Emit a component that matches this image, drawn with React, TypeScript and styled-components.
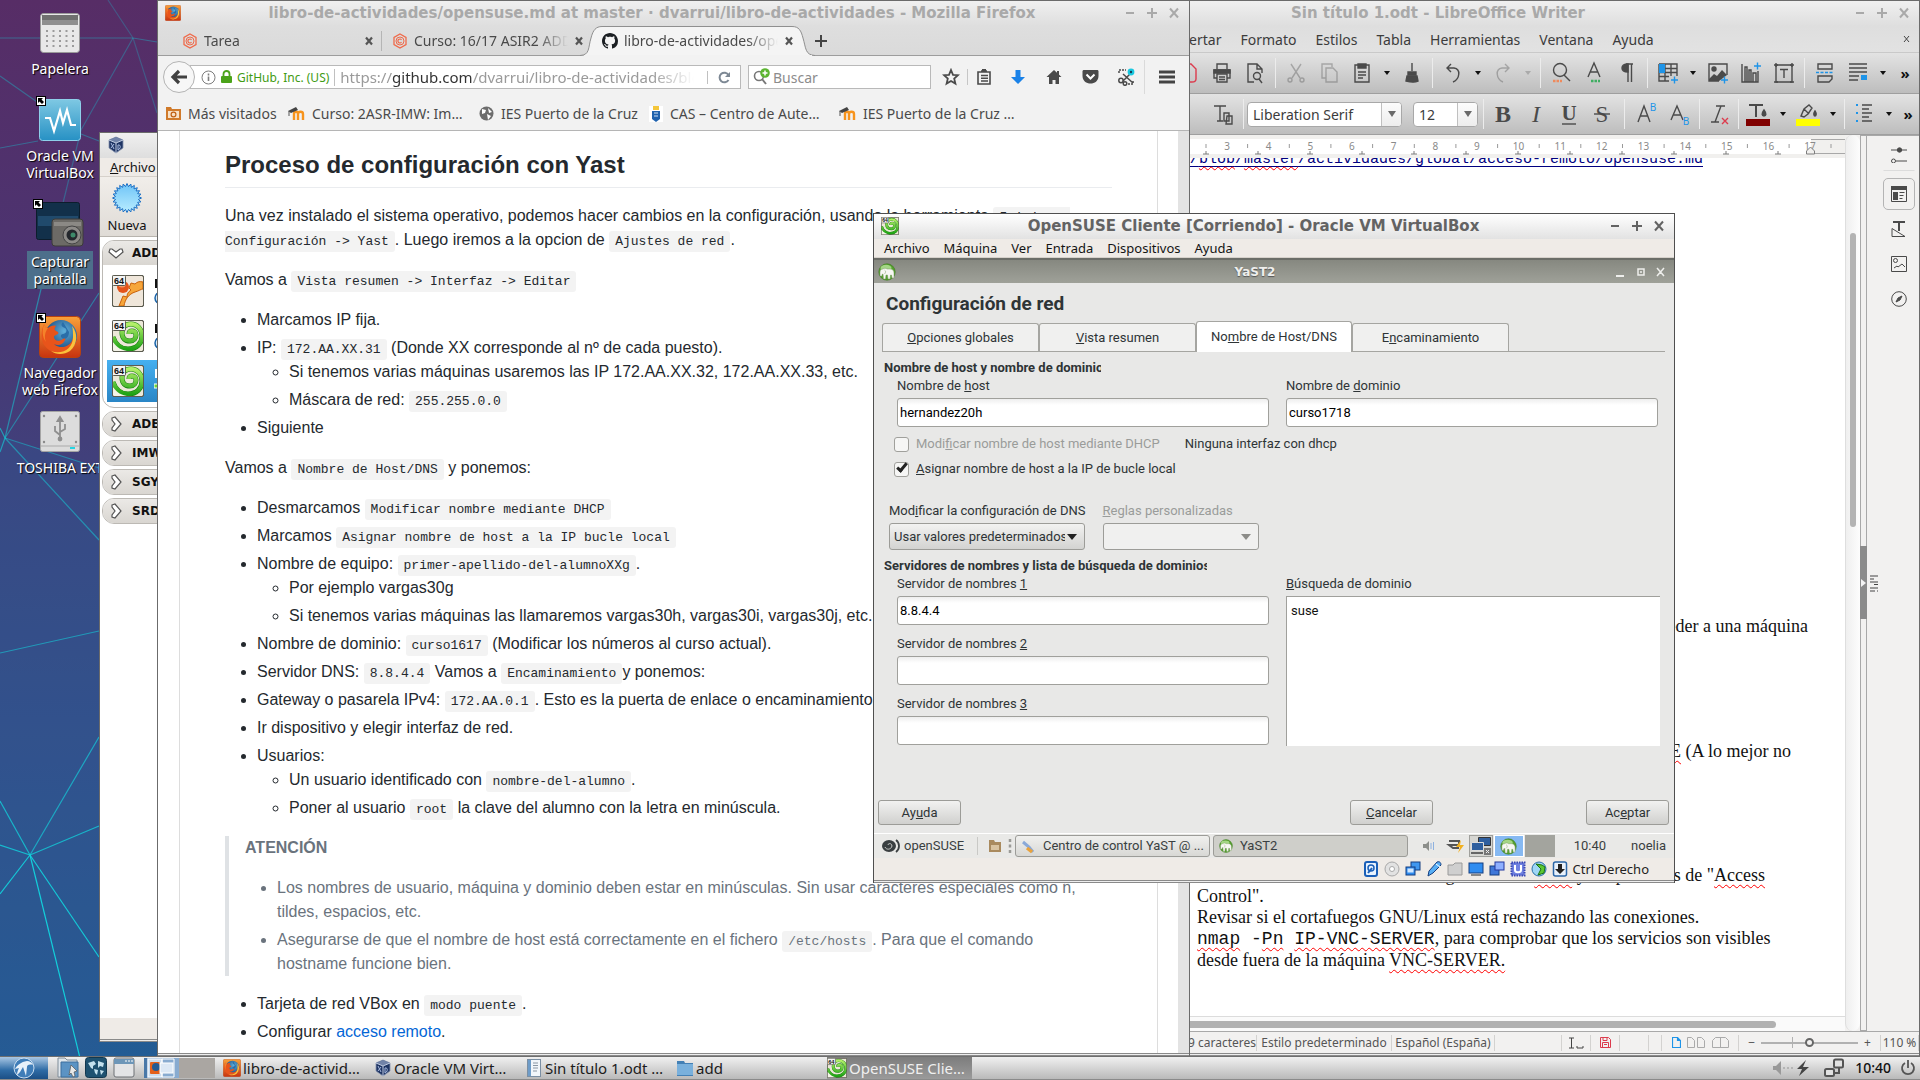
import React from 'react';
import styled, { createGlobalStyle, css } from 'styled-components';

const UI = '"Noto Sans", "Open Sans", sans-serif';
const TITLE = '"DejaVu Sans", "Noto Sans", sans-serif';
const YAST = 'Roboto, "Noto Sans", sans-serif';
const SANS = '"Liberation Sans", Arial, sans-serif';
const SERIF = '"Liberation Serif", "Times New Roman", serif';
const MONO = '"Liberation Mono", "Courier New", monospace';

const Global = createGlobalStyle`
  *, *::before, *::after { box-sizing: border-box; }
  html, body, #root { height: 100%; margin: 0; }
  body { overflow: hidden; font-family: ${UI}; font-size: 14px; color: #3c3c3c; }
  button, input, select, textarea { font: inherit; color: inherit; margin: 0; }
  button { border: 0; background: none; padding: 0; }
  svg { display: block; flex: none; }
  a { text-decoration: none; color: inherit; }
  ul { list-style: disc; }
`;

/* ---------- desktop ---------- */

const Screen = styled.div`
  height: 100vh;
  display: flex;
  flex-direction: column;
`;

const Desktop = styled.main`
  position: relative;
  flex: 1;
  min-height: 0;
  overflow: hidden;
  background: linear-gradient(#572d66 0%, #4b3471 26%, #3c4680 52%, #34508a 72%, #235c94 100%);
`;

const Wallpaper = styled.svg`
  position: absolute;
  inset: 0;
`;

const Shortcut = styled.button<{ $top: number }>`
  position: absolute;
  top: ${(p) => p.$top}px;
  left: 0;
  width: 120px;
  display: flex;
  flex-direction: column;
  align-items: center;
  color: #fff;
  font-size: 14px;
  line-height: 17px;
`;

const ShortcutLabel = styled.span<{ $active?: boolean }>`
  margin-top: 4px;
  padding: 2px 4px;
  white-space: pre;
  text-shadow: 1px 1px 1px #000;
  background: ${(p) => (p.$active ? '#4d6f8b' : 'transparent')};
`;

const ShortcutIcon = styled.span`
  position: relative;
`;

const LinkBadge = styled.svg`
  position: absolute;
  left: -3px;
  top: -3px;
`;

/* ---------- window frame ---------- */

const Win = styled.section`
  position: absolute;
  display: flex;
  flex-direction: column;
  border: 1px solid #6b6b6b;
  border-bottom: 0;
  background: #f2f1f0;
  overflow: hidden;
`;

const TitleBar = styled.header<{ $active?: boolean }>`
  flex: none;
  height: 25px;
  display: flex;
  align-items: center;
  padding: 0 8px 2px 7px;
  background: ${(p) => (p.$active ? 'linear-gradient(#fff, #e2e2e2)' : 'linear-gradient(#f0f0f0, #dedede)')};
  color: ${(p) => (p.$active ? '#636363' : '#a9a9a9')};
`;

const TitleText = styled.h1`
  flex: 1;
  margin: 0;
  text-align: center;
  font: bold 15px/20px ${TITLE};
  white-space: nowrap;
`;

const WinButtons = styled.div`
  display: flex;
  gap: 8px;
`;

const WinButton = styled.button`
  width: 14px;
  height: 14px;
`;

function Buttons() {
  const shapes = [
    ['Minimizar', 'M3 7h8'],
    ['Maximizar', 'M2 7h10M7 2v10'],
    ['Cerrar', 'M3 2.5l8 9M11 2.5l-8 9'],
  ];
  return (
    <WinButtons>
      {shapes.map(([label, d]) => (
        <WinButton key={label} aria-label={label}>
          <svg width="14" height="14" viewBox="0 0 14 14">
            <path d={d} stroke="currentColor" strokeWidth="2" fill="none" />
          </svg>
        </WinButton>
      ))}
    </WinButtons>
  );
}

/* ---------- shared drawings ---------- */

function FirefoxLogo({ size }: { size: number }) {
  return (
    <svg width={size} height={size} viewBox="0 0 42 42">
      <defs>
        <linearGradient id="ffbg" x1="0" y1="0" x2="0" y2="1">
          <stop offset="0" stopColor="#f9a23a" />
          <stop offset="1" stopColor="#c8330f" />
        </linearGradient>
        <radialGradient id="ffglobe" cx=".6" cy=".35" r=".7">
          <stop offset="0" stopColor="#5fb0dc" />
          <stop offset="1" stopColor="#123a70" />
        </radialGradient>
      </defs>
      <rect x=".5" y=".5" width="41" height="41" rx="4" fill="url(#ffbg)" stroke="#b8420f" />
      <circle cx="22" cy="20" r="16" fill="url(#ffglobe)" />
      <path d="M24 6c-3 3-1 5 2 6 3 2 1 6-2 6s-3 4 1 5c3 0 5-3 5-7" fill="#2a6ea9" />
      <path
        d="M5 8c1 3 2 4 4 4 2-2 6-3 8-2-2 2-2 4 0 5 2 1 3 1 2 3-1 1-4 1-4 3 0 4 5 5 9 2 2-1 3 0 2 1-2 5-7 6-11 4 6 6 17 3 19-6 1-3 1-5 0-8 2 2 3 5 3 8-1 10-12 17-22 14C3 33 0 20 5 8z"
        fill="#e8541b"
      />
      <path d="M33 10c6 7 6 18-2 25-6 4-14 4-19 0 11 4 22-2 22-14 0-4 0-8-1-11z" fill="#fbc23c" />
      <path d="M5 8c1 3 2 4 4 4-3 4-4 9-2 14-4-5-4-12-2-18z" fill="#f5822a" />
    </svg>
  );
}

const Guest64 = styled.span<{ $size: number }>`
  flex: none;
  width: ${(p) => p.$size}px;
  height: ${(p) => p.$size}px;
`;

function GuestIcon({ size, ubuntu }: { size: number; ubuntu?: boolean }) {
  return (
    <Guest64 $size={size}>
      <svg width={size} height={size} viewBox="0 0 32 32">
        <defs>
          <linearGradient id="gk" x1="0" y1="0" x2="0" y2="1">
            <stop offset="0" stopColor="#b4f06a" />
            <stop offset="1" stopColor="#1fa315" />
          </linearGradient>
        </defs>
        <rect x=".5" y=".5" width="31" height="31" rx="1.5" fill={ubuntu ? '#efe6da' : '#ece8d8'} stroke="#5c5c50" />
        {ubuntu ? (
          <g>
            <path d="M31 7c-4-1-6 0-8 2l-4-1-2 5 2 2c-3 2-4 4-4 7l-4-1-4 10h5c1-7 5-12 11-14 4-1 6-3 8-3z" fill="#f6a63a" stroke="#c9600a" />
            <circle cx="11" cy="12" r="6" fill="#e4541b" />
            <ellipse cx="10" cy="10" rx="3.5" ry="2.5" fill="#f49a6a" />
          </g>
        ) : (
          <g>
            <path d="M1 17c3 9 9 12 15 12 9 0 14-6 14-13 0-7-5-12-11-12-6 0-9 4-9 9 0 5 3 8 8 8 4 0 6-3 6-6s-2-4-4-4-3 1-3 3" fill="none" stroke="#17800f" strokeWidth="5" />
            <path d="M1 17c3 9 9 12 15 12 9 0 14-6 14-13 0-7-5-12-11-12-6 0-9 4-9 9 0 5 3 8 8 8 4 0 6-3 6-6s-2-4-4-4-3 1-3 3" fill="none" stroke="url(#gk)" strokeWidth="4" />
            <path d="M1 22c4 6 9 8 14 9H1z" fill="#f4f4e8" />
          </g>
        )}
        <rect x=".5" y=".5" width="31" height="31" rx="1.5" fill="none" stroke="#5c5c50" />
        <rect x=".5" y=".5" width="13" height="10" rx="1" fill="#f4f4f4" stroke="#5c5c50" />
        <text x="7" y="9" fontSize="9" fontWeight="bold" fontFamily="Liberation Sans" textAnchor="middle" fill="#111">
          64
        </text>
      </svg>
    </Guest64>
  );
}

function VBoxCube({ size }: { size: number }) {
  return (
    <svg width={size} height={size} viewBox="0 0 18 18">
      <path d="M9 1l7 3v8l-7 5-7-5V4z" fill="#1f3564" stroke="#8793ad" strokeWidth=".8" />
      <path d="M9 1l7 3-7 3-7-3z" fill="#7183a8" />
      <path d="M9 7v10M2 4l7 3 7-3" stroke="#c0cbe0" fill="none" />
      <path d="M4 7l3 6M7 8l-3 4M11 9v5c3-1 3-6 0-5" stroke="#a9bbe0" fill="none" />
    </svg>
  );
}

function YastBall({ size }: { size: number }) {
  return (
    <svg width={size} height={size} viewBox="0 0 18 18">
      <circle cx="9" cy="9" r="8.2" fill="#55a02e" stroke="#3b7a1c" strokeWidth=".6" />
      <ellipse cx="8" cy="5" rx="5.5" ry="3.2" fill="#a4d685" />
      <path
        d="M2 13V9c0-2 1-3 3-3 1-1 3-1 4 0h3c3 0 4 2 4 4v5h-2l-.5-3h-1l-.5 4h-2l-.5-4H8L7.500 16h-2L5 11l-1 .5V13z"
        fill="#f7f7f3"
        stroke="#7d9b68"
        strokeWidth=".5"
      />
      <path d="M6.5 7c1.500 1 1.500 2.500 0 4" fill="none" stroke="#9fb58c" strokeWidth=".7" />
    </svg>
  );
}

function Hexa() {
  return (
    <svg width="16" height="16" viewBox="0 0 16 16" fill="none" stroke="#ef6a4a">
      <path d="M8 1l6 3.4v7.2L8 15l-6-3.4V4.4z" strokeWidth="1.3" />
      <circle cx="8" cy="8" r="4" />
      <path d="M9.5 6.8a2 2 0 1 0 0 2.4" strokeWidth="1.2" />
    </svg>
  );
}

/* ---------- VirtualBox manager ---------- */

const ManagerWin = styled(Win)`
  left: 99px;
  top: 132px;
  bottom: 14px;
  width: 220px;
  background: #fff;
  color: #111;
`;

const MenuBar = styled.nav`
  flex: none;
  display: flex;
  align-items: center;
  height: 19px;
  padding: 0 10px 1px;
  gap: 14px;
  background: #efebe7;
  font-size: 13px;
  line-height: 18px;
  color: #141414;
  border-bottom: 1px solid #d6d1cb;
`;

const ManagerTools = styled.div`
  flex: none;
  height: 60px;
  padding: 6px 8px 0;
  background: linear-gradient(#f1eeea, #dfdbd6);
  border-bottom: 1px solid #b8b4ae;
`;

const NewButton = styled.button`
  display: flex;
  flex-direction: column;
  align-items: center;
  gap: 3px;
  width: 38px;
  font-size: 13px;
  line-height: 18px;
`;

const Groups = styled.div`
  flex: 1;
  padding: 3px 0 0 2px;
  display: flex;
  flex-direction: column;
  gap: 3px;
`;

const Group = styled.div`
  border: 1px solid #bcb9b4;
  border-radius: 12px 0 0 12px;
  overflow: hidden;
`;

const GroupHead = styled.button`
  display: flex;
  align-items: center;
  gap: 8px;
  width: 100%;
  height: 24px;
  padding-left: 5px;
  background: linear-gradient(#ebe9e6, #d9d6d1);
  font: bold 12px/18px ${TITLE};
`;

const Machine = styled.div<{ $active?: boolean }>`
  display: flex;
  align-items: center;
  gap: 10px;
  height: 42px;
  margin-left: 4px;
  padding-left: 5px;
  background: ${(p) => (p.$active ? 'linear-gradient(#46b0f0, #2a86c6)' : '#fff')};
`;

const Machines = styled.div`
  display: flex;
  flex-direction: column;
  gap: 3px;
  padding: 5px 0;
`;

const ManagerStatus = styled.footer`
  flex: none;
  height: 24px;
  background: #efebe7;
  border-bottom: 3px double #8a8a8a;
`;

function Chevron({ open }: { open?: boolean }) {
  return (
    <svg width="16" height="16" viewBox="0 0 16 16">
      <path
        transform={open ? 'rotate(90 8 8)' : undefined}
        d="M4 2l3-1 6 7-6 7-3-1v-2l3-4-3-4z"
        fill="#fff"
        stroke="#555"
        strokeWidth="1.2"
      />
    </svg>
  );
}

function StateDots({ active }: { active?: boolean }) {
  return (
    <svg width="20" height="34" viewBox="0 0 20 34">
      <path d="M1 5h2v9H1z" fill={active ? '#fff' : '#111'} />
      {active ? (
        <path d="M0 20h8v-3l6 5-6 5v-3H0z" fill="#6fd53a" stroke="#fff" />
      ) : (
        <circle cx="7" cy="24" r="6" fill="#d7ebfa" stroke="#1a63a8" strokeWidth="1.5" />
      )}
    </svg>
  );
}

function Manager() {
  return (
    <ManagerWin>
      <TitleBar>
        <VBoxCube size={18} />
      </TitleBar>
      <MenuBar>
        <span>
          <u>A</u>rchivo
        </span>
      </MenuBar>
      <ManagerTools>
        <NewButton>
          <svg width="30" height="30" viewBox="-15 -15 30 30">
            <defs>
              <linearGradient id="star" x1="0" y1="0" x2="0" y2="1">
                <stop offset="0" stopColor="#6fc4f7" />
                <stop offset="1" stopColor="#b9edff" />
              </linearGradient>
            </defs>
            <polygon
              points={Array.from({ length: 48 }, (_, i) => {
                const r = i % 2 ? 11.5 : 14.5;
                const a = (i * Math.PI) / 24;
                return `${(r * Math.cos(a)).toFixed(1)},${(r * Math.sin(a)).toFixed(1)}`;
              }).join(' ')}
              fill="url(#star)"
              stroke="#1c6fc4"
            />
          </svg>
          Nueva
        </NewButton>
      </ManagerTools>
      <Groups>
        <Group>
          <GroupHead>
            <Chevron open />
            ADD
          </GroupHead>
          <Machines>
            <Machine>
              <GuestIcon size={32} ubuntu />
              <StateDots />
            </Machine>
            <Machine>
              <GuestIcon size={32} />
              <StateDots />
            </Machine>
            <Machine $active>
              <GuestIcon size={32} />
              <StateDots active />
            </Machine>
          </Machines>
        </Group>
        {['ADE', 'IMW', 'SGY', 'SRD'].map((g) => (
          <Group key={g}>
            <GroupHead>
              <Chevron />
              {g}
            </GroupHead>
          </Group>
        ))}
      </Groups>
      <ManagerStatus />
    </ManagerWin>
  );
}

/* ---------- Firefox ---------- */

const FirefoxWin = styled(Win)`
  left: 157px;
  top: 0;
  bottom: 0;
  width: 1033px;
  color: #4a4a4a;
`;

const Tabs = styled.div`
  flex: none;
  display: flex;
  align-items: center;
  height: 30px;
  padding-left: 14px;
  background: linear-gradient(#dedede, #dadada);
  border-bottom: 1px solid #9d9d9d;
`;

const Tab = styled.div<{ $sep?: boolean }>`
  position: relative;
  display: flex;
  align-items: center;
  gap: 6px;
  width: 210px;
  height: 20px;
  padding-left: 10px;
  border-right: 1px solid ${(p) => (p.$sep ? '#b5b5b5' : 'transparent')};
`;

const TabShape = styled.svg`
  position: absolute;
  left: -12px;
  top: -5px;
`;

const TabText = styled.span`
  position: relative;
  width: 154px;
  overflow: hidden;
  white-space: nowrap;
  font-size: 14px;
  line-height: 20px;
  mask-image: linear-gradient(90deg, #000 80%, transparent);
`;

const TabIcon = styled.span`
  position: relative;
`;

const PlainButton = styled.button`
  position: relative;
  display: grid;
  place-items: center;
`;

function Close() {
  return (
    <PlainButton aria-label="Cerrar pestaña">
      <svg width="10" height="10" viewBox="0 0 10 10">
        <path d="M2 1.5l6 7M8 1.5l-6 7" stroke="#555" strokeWidth="2.2" />
      </svg>
    </PlainButton>
  );
}

const NavBar = styled.div`
  flex: none;
  display: flex;
  align-items: center;
  height: 42px;
  padding: 0 0 0 5px;
  background: #f2f2f2;
`;

const Back = styled.button`
  position: relative;
  z-index: 1;
  width: 32px;
  height: 32px;
  display: grid;
  place-items: center;
  border: 1px solid #b4b4b4;
  border-radius: 50%;
  background: #f7f7f7;
`;

const UrlBox = styled.div`
  flex: none;
  display: flex;
  align-items: center;
  gap: 5px;
  width: 551px;
  height: 24px;
  margin-left: -5px;
  padding: 0 9px 0 10px;
  border: 1px solid #b9b9b9;
  background: #fff;
`;

const Identity = styled.span`
  color: #3f9b13;
  font-size: 12px;
  padding-right: 5px;
  border-right: 1px solid #c0c0c0;
  white-space: nowrap;
`;

const Url = styled.span`
  flex: 1;
  overflow: hidden;
  white-space: nowrap;
  font-size: 15px;
  line-height: 22px;
  color: #9a9a9a;
  mask-image: linear-gradient(90deg, #000 88%, transparent);
  b {
    font-weight: normal;
    color: #333;
  }
`;

const Reload = styled.button`
  padding-left: 10px;
  margin-left: 8px;
  border-left: 1px solid #c0c0c0;
`;

const SearchBox = styled.label`
  flex: none;
  display: flex;
  align-items: center;
  gap: 3px;
  width: 183px;
  height: 24px;
  margin-left: 7px;
  padding-left: 4px;
  border: 1px solid #b9b9b9;
  background: #fff;
`;

const SearchInput = styled.input`
  width: 140px;
  border: 0;
  padding: 0;
  outline: 0;
  background: none;
  font-size: 14px;
  &::placeholder {
    color: #8c8c8c;
    opacity: 1;
  }
`;

const NavTools = styled.div`
  flex: none;
  display: flex;
  align-items: center;
  padding-left: 4px;
`;

const NavTool = styled(PlainButton)<{ $w?: number }>`
  width: ${(p) => p.$w || 36}px;
  height: 24px;
`;

const Rule = styled.span<{ $h: number; $c?: string }>`
  width: 1px;
  height: ${(p) => p.$h}px;
  background: ${(p) => p.$c || '#c6c6c6'};
`;

const Bookmarks = styled.nav`
  flex: none;
  display: flex;
  align-items: center;
  gap: 10px;
  height: 33px;
  padding: 0 8px 1px;
  background: #f2f2f2;
  border-bottom: 1px solid #b5b5b5;
`;

const Bookmark = styled.a<{ $w: number }>`
  display: flex;
  align-items: center;
  gap: 7px;
  width: ${(p) => p.$w}px;
  height: 24px;
  font-size: 14px;
  white-space: nowrap;
`;

const Viewport = styled.div`
  flex: 1;
  min-height: 0;
  display: flex;
  background: #fff;
  overflow: hidden;
`;

const PageFrame = styled.article`
  flex: 1;
  margin: 0 20px 0 21px;
  padding: 19px 45px 0;
  border: solid #dddddd;
  border-width: 0 1px;
  color: #24292e;
  font: 16px/24px ${SANS};
  h2 {
    margin: 0 0 16px;
    padding-bottom: 7px;
    border-bottom: 1px solid #eaecef;
    font: bold 24px/30px ${SANS};
  }
  p {
    margin: 0 0 16px;
  }
  ul {
    margin: 0 0 16px;
    padding-left: 32px;
  }
  ul ul {
    margin: 0;
    list-style: circle;
  }
  li + li {
    margin-top: 4px;
  }
  code {
    padding: 3px 6px;
    border-radius: 3px;
    background: #f3f3f3;
    font: 13px/16px ${MONO};
  }
  a {
    color: #0366d6;
  }
`;

const Warning = styled.blockquote`
  margin: 0 0 16px;
  padding: 0 16px;
  border-left: 4px solid #dfe2e5;
  color: #6a737d;
  ul {
    margin: 0;
  }
`;

const PageScroll = styled.div`
  width: 11px;
  background: #e3e3e3;
`;

const WinFoot = styled.footer`
  flex: none;
  height: 3px;
  border: solid #8a8a8a;
  border-width: 1px 0;
  background: #eee;
`;

function Moodle() {
  return (
    <svg width="17" height="16" viewBox="0 0 17 16">
      <path d="M6 14V8c0-3 4-3 4 0v6M10 14V8c0-3 5-3 5 0v6" fill="none" stroke="#f7941d" strokeWidth="2.4" />
      <path d="M0 5l8-4 2 3-7 3z" fill="#444" />
      <path d="M1 5v5" stroke="#555" />
    </svg>
  );
}

function Firefox() {
  return (
    <FirefoxWin>
      <TitleBar>
        <FirefoxLogo size={16} />
        <TitleText>libro-de-actividades/opensuse.md at master · dvarrui/libro-de-actividades - Mozilla Firefox</TitleText>
        <Buttons />
      </TitleBar>
      <Tabs>
        <Tab $sep>
          <Hexa />
          <TabText>Tarea</TabText>
          <Close />
        </Tab>
        <Tab>
          <Hexa />
          <TabText>Curso: 16/17 ASIR2 ADD: Administración</TabText>
          <Close />
        </Tab>
        <Tab>
          <TabShape width="236" height="30" viewBox="0 0 236 30">
            <path d="M0 29.5C10 29 8 22 11 12c2-8 5-11.500 11-11.500h190c7 0 9 4 11 11.500 3 10 2 17 12 17.500" fill="#f4f4f4" stroke="#8f8f8f" />
            <path d="M4 30h228" stroke="#f2f2f2" strokeWidth="2" />
          </TabShape>
          <TabIcon>
            <svg width="16" height="16" viewBox="0 0 16 16">
              <path
                fill="#1b1f23"
                d="M8 0C3.580 0 0 3.580 0 8c0 3.540 2.290 6.530 5.470 7.590.4.070.55-.17.55-.38 0-.19-.01-.82-.01-1.490-2.010.37-2.530-.49-2.690-.94-.09-.23-.48-.94-.82-1.130-.28-.15-.68-.52-.01-.53.63-.01 1.080.58 1.230.82.72 1.210 1.870.87 2.330.66.07-.52.28-.87.51-1.070-1.780-.2-3.640-.89-3.640-3.950 0-.87.31-1.590.82-2.150-.08-.2-.36-1.020.08-2.120 0 0 .67-.21 2.200.82.64-.18 1.320-.27 2-.27s1.360.09 2 .27c1.530-1.040 2.200-.82 2.200-.82.44 1.100.16 1.920.08 2.120.51.56.82 1.270.82 2.150 0 3.070-1.870 3.750-3.650 3.950.29.25.54.73.54 1.480 0 1.070-.01 1.930-.01 2.200 0 .21.15.46.55.38A8.010 8.010 0 0 0 16 8c0-4.420-3.580-8-8-8z"
              />
            </svg>
          </TabIcon>
          <TabText>libro-de-actividades/opensuse.md</TabText>
          <Close />
        </Tab>
        <PlainButton aria-label="Nueva pestaña">
          <svg width="38" height="14" viewBox="0 0 38 14">
            <path d="M13 7h12M19 1v12" stroke="#444" strokeWidth="2" />
          </svg>
        </PlainButton>
      </Tabs>
      <NavBar>
        <Back aria-label="Atrás">
          <svg width="18" height="16" viewBox="0 0 18 16">
            <path d="M17 8H4M9 2L3 8l6 6" fill="none" stroke="#404040" strokeWidth="3.2" />
          </svg>
        </Back>
        <UrlBox>
          <svg width="15" height="15" viewBox="0 0 15 15" fill="none" stroke="#7d7d7d">
            <circle cx="7.5" cy="7.5" r="6.5" />
            <path d="M7.5 6.5V11M7.5 3.5v2" strokeWidth="1.6" />
          </svg>
          <svg width="11" height="14" viewBox="0 0 11 14">
            <rect y="6" width="11" height="7" rx="1" fill="#4ba31a" />
            <path d="M2.5 7V4c0-4 6-4 6 0v3" fill="none" stroke="#4ba31a" strokeWidth="1.8" />
          </svg>
          <Identity>GitHub, Inc. (US)</Identity>
          <Url>
            https://<b>github.com</b>/dvarrui/libro-de-actividades/blob/master
          </Url>
          <Reload aria-label="Recargar">
            <svg width="13" height="13" viewBox="0 0 13 13">
              <path d="M10.5 9a4.800 4.800 0 1 1 0-5" fill="none" stroke="#7d8894" strokeWidth="2" />
              <path d="M12 1v5H7z" fill="#7d8894" />
            </svg>
          </Reload>
        </UrlBox>
        <SearchBox>
          <svg width="17" height="18" viewBox="0 0 17 18">
            <circle cx="6" cy="8" r="4.5" fill="none" stroke="#777" strokeWidth="1.6" />
            <path d="M9 11l4 5" stroke="#777" strokeWidth="2" />
            <circle cx="12" cy="5" r="4.8" fill="#5cb531" />
            <path d="M9.5 5h5M12 2.5v5" stroke="#fff" strokeWidth="1.5" />
          </svg>
          <SearchInput placeholder="Buscar" aria-label="Buscar" />
        </SearchBox>
        <NavTools>
          <NavTool $w={32} aria-label="Marcador">
            <svg width="18" height="18" viewBox="0 0 18 18">
              <path d="M9 2l2 4.800 5 .4-3.800 3.400 1.200 5L9 13l-4.400 2.600 1.200-5L2 7.200l5-.4z" fill="none" stroke="#4a4a4a" strokeWidth="1.8" />
            </svg>
          </NavTool>
          <Rule $h={16} />
          <NavTool $w={32} aria-label="Marcadores">
            <svg width="16" height="16" viewBox="0 0 16 16" fill="none" stroke="#4a4a4a" strokeWidth="1.6">
              <path d="M2 3h12v12H2zM5 6.5h7M5 9.2h7M5 12h7M5 2h6" />
              <path d="M6 1h4" strokeWidth="2" />
            </svg>
          </NavTool>
          <NavTool aria-label="Descargas">
            <svg width="16" height="16" viewBox="0 0 16 16">
              <path d="M5.5 1h5v7H15l-7 7-7-7h4.500z" fill="#1a82e8" />
            </svg>
          </NavTool>
          <NavTool aria-label="Inicio">
            <svg width="16" height="16" viewBox="0 0 16 16">
              <path d="M8 1l7.500 7H13v7H9.500v-4h-3v4H3V8H.5z" fill="#4a4a4a" />
              <path d="M11 2h2v4h-2z" fill="#4a4a4a" />
            </svg>
          </NavTool>
          <NavTool aria-label="Pocket">
            <svg width="17" height="16" viewBox="0 0 17 16">
              <path d="M2 1h13c1 0 1.500.5 1.500 1.500V7c0 10-16 10-16 0V2.500C.5 1.500 1 1 2 1z" fill="#4a4a4a" />
              <path d="M4.5 5.500l4 4 4-4" fill="none" stroke="#fff" strokeWidth="2" />
            </svg>
          </NavTool>
          <NavTool aria-label="Recortar">
            <svg width="18" height="18" viewBox="0 0 18 18" fill="none" stroke="#4a4a4a" strokeWidth="1.5">
              <path d="M2 5V2h7M11 16h5v-4" strokeDasharray="2 1" />
              <path d="M6 6l10 9M6 13L14 5" />
              <circle cx="4" cy="12.5" r="2.2" />
              <circle cx="8" cy="15.5" r="1.8" />
              <circle cx="14" cy="4" r="3.4" fill="#19c8e0" stroke="none" />
              <circle cx="14" cy="4" r="1.2" fill="#1a3a50" stroke="none" />
            </svg>
          </NavTool>
          <Rule $h={34} $c="#dadada" />
          <NavTool $w={44} aria-label="Menú">
            <svg width="16" height="14" viewBox="0 0 16 14">
              <path d="M0 2h16M0 7h16M0 12h16" stroke="#444" strokeWidth="3" />
            </svg>
          </NavTool>
        </NavTools>
      </NavBar>
      <Bookmarks>
        <Bookmark href="#" $w={112}>
          <svg width="15" height="15" viewBox="0 0 15 15">
            <path d="M0 1h5l1 2h9v11H0z" fill="#d07a2a" />
            <path d="M2 5h11v7H2z" fill="#f7e0c6" />
            <circle cx="7.5" cy="8.5" r="2.4" fill="none" stroke="#c05f10" strokeWidth="1.2" />
          </svg>
          Más visitados
        </Bookmark>
        <Bookmark href="#" $w={181}>
          <Moodle />
          Curso: 2ASR-IMW: Im…
        </Bookmark>
        <Bookmark href="#" $w={160}>
          <svg width="15" height="15" viewBox="0 0 15 15">
            <circle cx="7.5" cy="7.5" r="7" fill="#6d6d6d" />
            <path d="M3 3l4 1-1 3-3 1zM9 2l4 4-3 1zM8 8l4 2-3 4z" fill="#fff" />
          </svg>
          IES Puerto de la Cruz
        </Bookmark>
        <Bookmark href="#" $w={180}>
          <svg width="14" height="16" viewBox="0 0 14 16">
            <rect width="14" height="16" fill="#fff" />
            <path d="M4 0h6v4H4z" fill="#f4c63a" />
            <path d="M3 5h8v8l-4 3-4-3z" fill="#1f62ae" />
            <path d="M5 7h4M5 10h4" stroke="#cfe0f5" />
          </svg>
          CAS – Centro de Aute…
        </Bookmark>
        <Bookmark href="#" $w={182}>
          <Moodle />
          IES Puerto de la Cruz …
        </Bookmark>
      </Bookmarks>
      <Viewport>
        <PageFrame>
          <h2>Proceso de configuración con Yast</h2>
          <p>
            Una vez instalado el sistema operativo, podemos hacer cambios en la configuración, usando la herramienta{' '}
            <code>Inicio -&gt; Configuración -&gt; Yast</code>. Luego iremos a la opcion de <code>Ajustes de red</code>.
          </p>
          <p>
            Vamos a <code>Vista resumen -&gt; Interfaz -&gt; Editar</code>
          </p>
          <ul>
            <li>Marcamos IP fija.</li>
            <li>
              IP: <code>172.AA.XX.31</code> (Donde XX corresponde al nº de cada puesto).
              <ul>
                <li>Si tenemos varias máquinas usaremos las IP 172.AA.XX.32, 172.AA.XX.33, etc.</li>
                <li>
                  Máscara de red: <code>255.255.0.0</code>
                </li>
              </ul>
            </li>
            <li>Siguiente</li>
          </ul>
          <p>
            Vamos a <code>Nombre de Host/DNS</code> y ponemos:
          </p>
          <ul>
            <li>
              Desmarcamos <code>Modificar nombre mediante DHCP</code>
            </li>
            <li>
              Marcamos <code>Asignar nombre de host a la IP bucle local</code>
            </li>
            <li>
              Nombre de equipo: <code>primer-apellido-del-alumnoXXg</code>.
              <ul>
                <li>Por ejemplo vargas30g</li>
                <li>Si tenemos varias máquinas las llamaremos vargas30h, vargas30i, vargas30j, etc.</li>
              </ul>
            </li>
            <li>
              Nombre de dominio: <code>curso1617</code> (Modificar los números al curso actual).
            </li>
            <li>
              Servidor DNS: <code>8.8.4.4</code> Vamos a <code>Encaminamiento</code>y ponemos:
            </li>
            <li>
              Gateway o pasarela IPv4: <code>172.AA.0.1</code>. Esto es la puerta de enlace o encaminamiento.
            </li>
            <li>Ir dispositivo y elegir interfaz de red.</li>
            <li>
              Usuarios:
              <ul>
                <li>
                  Un usuario identificado con <code>nombre-del-alumno</code>.
                </li>
                <li>
                  Poner al usuario <code>root</code> la clave del alumno con la letra en minúscula.
                </li>
              </ul>
            </li>
          </ul>
          <Warning>
            <p>
              <strong>ATENCIÓN</strong>
            </p>
            <ul>
              <li>
                Los nombres de usuario, máquina y dominio deben estar en minúsculas. Sin usar caracteres especiales como
                ñ, tildes, espacios, etc.
              </li>
              <li>
                Asegurarse de que el nombre de host está correctamente en el fichero <code>/etc/hosts</code>. Para que
                el comando hostname funcione bien.
              </li>
            </ul>
          </Warning>
          <ul>
            <li>
              Tarjeta de red VBox en <code>modo puente</code>.
            </li>
            <li>
              Configurar <a href="#">acceso remoto</a>.
            </li>
          </ul>
        </PageFrame>
        <PageScroll />
      </Viewport>
      <WinFoot />
    </FirefoxWin>
  );
}

/* ---------- LibreOffice Writer ---------- */

const WriterWin = styled(Win)`
  left: 1015px;
  right: 0;
  top: 0;
  bottom: 0;
`;

const WriterMenu = styled.nav`
  flex: none;
  display: flex;
  align-items: center;
  gap: 19px;
  height: 27px;
  padding: 0 8px 0 153px;
  background: linear-gradient(#dedede, #e2e2e2);
  border-bottom: 1px solid #c9c9c9;
  font-size: 14px;
  color: #3c3c3c;
`;

const Spacer = styled.span`
  flex: 1;
`;

const ToolRow = styled.div`
  flex: none;
  display: flex;
  align-items: center;
  justify-content: flex-end;
  height: 41px;
  background: linear-gradient(#e3e3e3, #bdbdbd);
  border-bottom: 1px solid #9f9f9f;
  color: #4a4a4a;
`;

const Tool = styled.button`
  width: 33px;
  height: 30px;
  display: grid;
  place-items: center;
`;

const Drop = styled.button`
  width: 17px;
  height: 30px;
  display: grid;
  place-items: center;
`;

const Sep = styled.span<{ $w?: number }>`
  width: ${(p) => p.$w || 8}px;
  height: 30px;
  display: flex;
  justify-content: center;
  &::before {
    content: '';
    width: 1px;
    background: #ececec;
  }
`;

const More = styled.button<{ $w: number }>`
  width: ${(p) => p.$w}px;
  font: bold 15px/24px ${UI};
  color: #111;
`;

const ComboWrap = styled.span<{ $w: number; $mr: number }>`
  position: relative;
  width: ${(p) => p.$w}px;
  height: 25px;
  margin-right: ${(p) => p.$mr}px;
`;

const Combo = styled.select`
  appearance: none;
  width: 100%;
  height: 100%;
  padding: 0 5px;
  border: 1px solid #a8a8a8;
  border-radius: 4px;
  background: #fff;
  font-size: 14px;
  color: #3c3c3c;
`;

const ComboArrow = styled.span`
  position: absolute;
  right: 1px;
  top: 1px;
  bottom: 1px;
  width: 20px;
  display: grid;
  place-items: center;
  border-left: 1px solid #c0c0c0;
  border-radius: 0 3px 3px 0;
  background: linear-gradient(#fcfcfc, #ededed);
  pointer-events: none;
`;

const T = ({ children, op }: { children: React.ReactNode; op?: number }) => (
  <Tool>
    <svg width="24" height="24" viewBox="0 0 24 24" fill="none" stroke="#4a4a4a" strokeWidth="1.4" opacity={op}>
      {children}
    </svg>
  </Tool>
);

const D = ({ off }: { off?: boolean }) => (
  <Drop aria-label="Más opciones">
    <svg width="8" height="5" viewBox="0 0 8 5">
      <path d="M1 0h6L4 4z" fill={off ? '#aaa' : '#111'} />
    </svg>
  </Drop>
);

const Glyph = ({ x = 12, y = 20, s = 21, w, st, f = SERIF, c = '#4a4a4a', children }: any) => (
  <text x={x} y={y} fontSize={s} fontWeight={w} fontStyle={st} fontFamily={f} fill={c} stroke="none" textAnchor="middle">
    {children}
  </text>
);

const RulerBar = styled.div`
  flex: none;
  height: 23px;
  padding-top: 4px;
  background: #f1f0ee;
  display: flex;
  justify-content: flex-end;
`;

const WriterBody = styled.div`
  flex: 1;
  min-height: 0;
  display: flex;
`;

const DocColumn = styled.div`
  flex: 1;
  min-width: 0;
  display: flex;
  flex-direction: column;
`;

const DocPage = styled.article`
  flex: 1;
  min-height: 0;
  overflow: hidden;
  padding: 0 34px 0 181px;
  background: #fff;
  color: #111;
  font: 18px/21px ${SERIF};
`;

const DocLink = styled.p`
  display: flex;
  justify-content: flex-end;
  height: 22px;
  margin: -7px 0 0;
  padding-right: 108px;
  font: 15px/18px ${MONO};
  white-space: nowrap;
  a {
    color: #000080;
    text-decoration: underline;
    text-underline-offset: 3px;
  }
`;

const DocPar = styled.p<{ $gap?: number; $end?: number }>`
  margin: 0;
  padding-top: ${(p) => p.$gap || 0}px;
  ${(p) =>
    p.$end !== undefined &&
    css`
      text-align: right;
      padding-right: ${p.$end}px;
    `}
`;

const Bad = styled.span`
  text-decoration: underline wavy #f00 1px;
  text-underline-offset: 3px;
  text-decoration-skip-ink: none;
`;

const Mono = styled.span`
  font-family: ${MONO};
`;

const HScroll = styled.div`
  flex: none;
  height: 15px;
  padding: 4px 69px 4px 0;
  background: #fafafa;
  border-top: 1px solid #dcdcdc;
  &::before {
    content: '';
    display: block;
    height: 7px;
    border-radius: 4px;
    background: #b1b1b1;
  }
`;

const VScroll = styled.div`
  width: 15px;
  padding: 98px 4px 0;
  border-left: 1px solid #dedede;
  border-radius: 8px;
  background: linear-gradient(90deg, #efefef, #fdfdfd);
  &::before {
    content: '';
    display: block;
    height: 294px;
    border-radius: 4px;
    background: #b3b3b3;
  }
`;

const Splitter = styled.div`
  width: 7px;
  border: 1px solid #a8a8a8;
  display: flex;
  flex-direction: column;
  padding-top: 410px;
`;

const SplitGrip = styled.button`
  height: 73px;
  margin: 0 -1px;
  display: grid;
  place-items: center;
  background: #8b8b8b;
`;

const SideBar = styled.aside`
  width: 52px;
  display: flex;
  flex-direction: column;
  align-items: flex-end;
  gap: 3px;
  padding: 3px 4px 0 0;
  border-top: 1px solid #a8a8a8;
`;

const SideTool = styled.button<{ $active?: boolean; $line?: boolean }>`
  width: 32px;
  height: 32px;
  display: grid;
  place-items: center;
  border: 1px solid ${(p) => (p.$active ? '#b4b4b4' : 'transparent')};
  border-radius: 5px;
  ${(p) => p.$line && 'border-bottom-color: #dcdcdc; border-radius: 0; margin-bottom: 4px;'}
`;

const DeckMark = styled.svg`
  align-self: flex-start;
  margin: 257px 0 0 3px;
`;

const StatusBar = styled.footer`
  flex: none;
  display: flex;
  align-items: center;
  height: 22px;
  border-top: 1px solid #a9a9a9;
  font-size: 12px;
  color: #555;
`;

const Cell = styled.span<{ $w?: number }>`
  flex: ${(p) => (p.$w ? `0 0 ${p.$w}px` : '1')};
  display: flex;
  align-items: center;
  justify-content: center;
  gap: 6px;
  height: 16px;
  border-right: 1px solid #d3d2d0;
  white-space: nowrap;
  overflow: hidden;
`;

const CountCell = styled(Cell)`
  justify-content: flex-end;
`;

const Zoom = styled.input`
  appearance: none;
  width: 97px;
  height: 11px;
  background: linear-gradient(#b1b1b1, #b1b1b1) center / 100% 2px no-repeat,
    linear-gradient(#b1b1b1, #b1b1b1) 31px 0 / 1px 11px no-repeat;
  &::-webkit-slider-thumb {
    appearance: none;
    width: 9px;
    height: 9px;
    border: 2px solid #666;
    border-radius: 50%;
    background: #f2f1f0;
  }
`;

function Ruler() {
  const numbers = Array.from({ length: 15 }, (_, i) => i + 3);
  const pitch = 41.65;
  return (
    <svg width="660" height="16" viewBox="0 0 660 16">
      <rect width="626" height="15" fill="#fff" />
      <path d="M626 .5h34M626 14.5h34" stroke="#a8a8a8" />
      {numbers.map((n, i) => (
        <g key={n}>
          <path d={`M${(21 + i * pitch).toFixed(1)} 5v4`} stroke="#999" />
          <text x={42 + i * pitch} y="11" fontSize="10" fontFamily="Noto Sans" fill="#8a8a8a" textAnchor="middle">
            {n}
          </text>
        </g>
      ))}
      {numbers.slice(0, 12).map((n, i) => (
        <path key={n} d={`M${18 + i * 52} 15h6M${21 + i * 52} 12v3`} stroke="#7d7d7d" />
      ))}
      <path d="M621.5 15v-3l4-4 4 4v3z" fill="#f1f0ee" stroke="#7d7d7d" />
      <path d="M646 5v4" stroke="#999" />
    </svg>
  );
}

function Writer() {
  return (
    <WriterWin>
      <TitleBar>
        <TitleText>Sin título 1.odt - LibreOffice Writer</TitleText>
        <Buttons />
      </TitleBar>
      <WriterMenu>
        {['Insertar', 'Formato', 'Estilos', 'Tabla', 'Herramientas', 'Ventana', 'Ayuda'].map((m) => (
          <span key={m}>{m}</span>
        ))}
        <Spacer />
        <PlainButton aria-label="Cerrar documento">
          <svg width="8" height="8" viewBox="0 0 8 8">
            <path d="M1 1l5 6M6 1L1 7" stroke="#444" />
          </svg>
        </PlainButton>
      </WriterMenu>
      <ToolRow>
        <T>
          <path d="M4 3h10l5 5v10c0 2-2 3-4 3H4z" stroke="#dc3b4d" />
        </T>
        <T>
          <path d="M7 8V3h10v5M7 17H4V9h16v8h-3M7 13h10v8H7zM9 16h6M9 18.5h6" />
          <path d="M4 9h16v3H4z" fill="#4a4a4a" />
        </T>
        <T>
          <path d="M11 21H5V3h9l5 5v4M14 3v5h5" />
          <circle cx="14" cy="15" r="3.5" />
          <path d="M16 18l3 4" />
        </T>
        <Sep />
        <T op={0.35}>
          <path d="M7 3l9 14M17 3L8 17" />
          <circle cx="6" cy="19" r="2" />
          <circle cx="18" cy="19" r="2" />
        </T>
        <T op={0.35}>
          <path d="M9 17H5V3h10v3M9 7h7l4 4v10H9z" />
        </T>
        <T>
          <path d="M8 4H5v17h14V4h-3M8 11h8M8 14h8M8 17h5" />
          <path d="M8 3h8v4H8z" fill="#4a4a4a" />
        </T>
        <D />
        <T>
          <path d="M12 2v8M8 11h8v3H8z" fill="#4a4a4a" />
          <path d="M7 15h10l1 5c-4 2-8 1-12 0z" fill="#4a4a4a" />
        </T>
        <Sep />
        <T>
          <path d="M10 3L6 7l4 4M6 7h7c7 1 6 11-1 14" />
        </T>
        <D />
        <T op={0.35}>
          <path d="M14 3l4 4-4 4M18 7h-7c-7 1-6 11 1 14" />
        </T>
        <D off />
        <Sep />
        <T>
          <circle cx="11" cy="9" r="6.5" />
          <path d="M15 14l6 6" />
          <path d="M4 20h9" stroke="#ef8a5c" strokeWidth="2.5" strokeDasharray="2.5 1" />
        </T>
        <T>
          <path d="M6 16L12 2l6 14M8 11h8" />
          <path d="M9 20h9" stroke="#3fae62" strokeWidth="2.5" strokeDasharray="2.5 1" />
        </T>
        <T>
          <path d="M13 3c-8 0-8 8 0 8z" fill="#4a4a4a" />
          <path d="M13 3v18M16.5 3v18M11 3h7" />
        </T>
        <Sep />
        <T>
          <path d="M3 3h18v12M13 20H3V3M3 7.5h18M3 11.5h18M3 15.5h10M9 3v17M15 3v12" />
          <path d="M3 3h6v9H3z" fill="#1e94e8" stroke="none" />
          <path d="M15 19h7M18.5 15.5v7" stroke="#1e94e8" />
        </T>
        <D />
        <T>
          <path d="M13 20H3V3h18v11" />
          <circle cx="8" cy="8" r="2" fill="#4a4a4a" />
          <path d="M3 18l5-5 3 2 5-6 5 5-8 6H3z" fill="#4a4a4a" stroke="none" />
          <path d="M15 19h7M18.5 15.5v7" stroke="#1e94e8" />
        </T>
        <T>
          <path d="M3 3v18h16V10M6 6h2v15H6zM10 9h2v12h-2zM14 12h3v9h-3z" />
          <path d="M15 5h7M18.5 1.5v7" stroke="#1e94e8" />
        </T>
        <T>
          <path d="M4 4h16v17H4zM8 8.5h8M12 8.5V17" />
          <path d="M2 4h4M18 4h4M2 21h4M18 21h4M4 2v4M20 2v4" />
        </T>
        <Sep />
        <T>
          <path d="M5 3v5h14V3zM5 15h14v3l-3 3H5z" />
          <path d="M3 11.5h18" stroke="#1e94e8" strokeDasharray="3 1.5" />
        </T>
        <T>
          <path d="M3 3h18M3 7h18M3 11h18M3 15h10M3 19h9" />
          <path d="M15 14h6v5h-6z" fill="#1e94e8" stroke="none" />
        </T>
        <D />
        <More $w={28} aria-label="Más herramientas">
          »
        </More>
      </ToolRow>
      <ToolRow>
        <T>
          <path d="M3 4h12M9 4v15M6 19h6M13 11h5v8h-5zM16 14h5v8h-6z" />
        </T>
        <Sep />
        <ComboWrap $w={155} $mr={11}>
          <Combo aria-label="Nombre de la fuente">
            <option>Liberation Serif</option>
          </Combo>
          <ComboArrow>
            <svg width="8" height="8" viewBox="0 0 8 8">
              <path d="M0 1h8L4 7z" fill="#6a6a6a" />
            </svg>
          </ComboArrow>
        </ComboWrap>
        <ComboWrap $w={65} $mr={2}>
          <Combo aria-label="Tamaño de la fuente">
            <option>12</option>
          </Combo>
          <ComboArrow>
            <svg width="8" height="8" viewBox="0 0 8 8">
              <path d="M0 1h8L4 7z" fill="#6a6a6a" />
            </svg>
          </ComboArrow>
        </ComboWrap>
        <Sep $w={6} />
        <T>
          <Glyph w="bold" s={24}>
            B
          </Glyph>
        </T>
        <T>
          <Glyph st="italic" s={24}>
            I
          </Glyph>
        </T>
        <T>
          <Glyph y={18} w="bold" s={21}>
            U
          </Glyph>
          <path d="M5 22h14" />
        </T>
        <T>
          <Glyph s={23}>S</Glyph>
          <path d="M4 12h16" />
        </T>
        <Sep $w={12} />
        <T>
          <path d="M3 20L9 4l6 16M5 14h8" />
          <Glyph x={18} y={9} s={10} f="Noto Sans" c="#1e94e8">
            B
          </Glyph>
        </T>
        <T>
          <path d="M3 18L9 4l6 14M5 13h8" />
          <Glyph x={18} y={23} s={10} f="Noto Sans" c="#1e94e8">
            B
          </Glyph>
        </T>
        <Sep $w={6} />
        <T>
          <path d="M9 4h9M14 4L8 20M4 20h8" />
          <path d="M15 16l6 6M21 16l-6 6" stroke="#dc3b4d" />
        </T>
        <Sep $w={6} />
        <T>
          <path d="M3 3h14M10 3v12" strokeWidth="2" />
          <path d="M18 8c3 4 2 6 0 6s-3-2 0-6z" fill="#4a4a4a" />
          <path d="M0 17h24v7H0z" fill="#800000" stroke="none" />
        </T>
        <D />
        <T>
          <path d="M5 14l3-7 5-4 3 3-4 6-4 3zM8 7l5 5" />
          <path d="M19 9c2 3 1 5 0 5s-2-2 0-5z" fill="#4a4a4a" />
          <path d="M0 17h24v7H0z" fill="#ffff00" stroke="none" />
        </T>
        <D />
        <Sep $w={6} />
        <T>
          <path d="M10 3h10M10 7h7M10 11h10M10 15h7M10 19h10" />
          <path d="M4 3h2M4 11h2M4 19h2" stroke="#1e94e8" strokeWidth="2" />
        </T>
        <D />
        <More $w={22} aria-label="Más formato">
          »
        </More>
      </ToolRow>
      <WriterBody>
        <DocColumn>
          <RulerBar>
            <Ruler />
          </RulerBar>
          <DocPage>
            <DocLink>
              <a href="#">
                s/<Bad>blob</Bad>/<Bad>master</Bad>/actividades/global/acceso-remoto/opensuse.md
              </a>
            </DocLink>
            <DocPar $gap={443} $end={3}>
              acceder a una máquina
            </DocPar>
            <DocPar $gap={104} $end={20}>
              <Bad>SUSE</Bad> (A lo mejor no
            </DocPar>
            <DocPar $gap={103} $end={46}>
              Revisar la configuración de <Bad>VNC</Bad> y los permisos de "<Bad>Access</Bad>
            </DocPar>
            <DocPar>Control".</DocPar>
            <DocPar>Revisar si el cortafuegos GNU/Linux está rechazando las conexiones.</DocPar>
            <DocPar>
              <Mono>
                <Bad>nmap</Bad> -<Bad>Pn</Bad> <Bad>IP-VNC-SERVER</Bad>
              </Mono>
              , para comprobar que los servicios son visibles
            </DocPar>
            <DocPar>
              desde fuera de la máquina <Bad>VNC-SERVER.</Bad>
            </DocPar>
          </DocPage>
          <HScroll />
        </DocColumn>
        <VScroll />
        <Splitter>
          <SplitGrip aria-label="Mostrar u ocultar">
            <svg width="5" height="8" viewBox="0 0 5 8">
              <path d="M0 0l5 4-5 4z" fill="#f4f4f4" />
            </svg>
          </SplitGrip>
        </Splitter>
        <SideBar>
          <SideTool $line aria-label="Configuración">
            <svg width="16" height="16" viewBox="0 0 16 16" fill="none" stroke="#4a4a4a">
              <path d="M0 3h16M5 14h11" />
              <circle cx="8.5" cy="3" r="2.2" fill="#4a4a4a" />
              <circle cx="2.5" cy="14" r="2" />
            </svg>
          </SideTool>
          <SideTool $active aria-label="Propiedades">
            <svg width="16" height="16" viewBox="0 0 16 16" fill="none" stroke="#4a4a4a">
              <path d="M.5.5h15v15H.5z" />
              <path d="M0 0h16v4H0zM2 6h5v8H2z" fill="#4a4a4a" stroke="none" />
              <path d="M8.5 6.5h5M8.5 9.5h4M8.5 12.5h3" />
            </svg>
          </SideTool>
          <SideTool aria-label="Estilos">
            <svg width="16" height="16" viewBox="0 0 16 16" fill="none" stroke="#4a4a4a">
              <path d="M2 1h12M8 1v9" strokeWidth="2" />
              <path d="M1 7.5v8h13z" />
            </svg>
          </SideTool>
          <SideTool aria-label="Galería">
            <svg width="16" height="16" viewBox="0 0 16 16" fill="none" stroke="#4a4a4a">
              <path d="M.5.5h15v15H.5zM3 12l3-2 1 1 4-3 3 3" />
              <circle cx="4.5" cy="4.5" r="2" />
            </svg>
          </SideTool>
          <SideTool aria-label="Navegador">
            <svg width="16" height="16" viewBox="0 0 16 16" fill="none" stroke="#4a4a4a">
              <circle cx="8" cy="8" r="7.3" />
              <path d="M11 5L9 9l-4 2 2-4z" fill="#4a4a4a" />
            </svg>
          </SideTool>
          <DeckMark width="9" height="18" viewBox="0 0 9 18">
            <path d="M0 1h8M0 4h4M0 7h8M4 9.5h4M0 13h8M0 16h5M7 16h1" stroke="#444" strokeWidth="1.2" />
          </DeckMark>
        </SideBar>
      </WriterBody>
      <StatusBar>
        <CountCell>4 589 caracteres</CountCell>
        <Cell $w={135}>Estilo predeterminado</Cell>
        <Cell $w={103}>Español (España)</Cell>
        <Cell $w={67} />
        <Cell $w={29}>
          <svg width="16" height="12" viewBox="0 0 16 12" fill="none" stroke="#444">
            <path d="M1 1h5M3.5 1v10M1 11h5M9 9v2h6V9" />
          </svg>
        </Cell>
        <Cell $w={29}>
          <svg width="11" height="11" viewBox="0 0 11 11" fill="none" stroke="#dc3b4d">
            <path d="M.5.5h8l2 2v8H.5zM3 .5v3h4v-3M2.5 10.5v-5h6v5M4 7.5h3" />
          </svg>
        </Cell>
        <Cell $w={29} />
        <Cell $w={13} />
        <Cell $w={77}>
          <svg width="9" height="11" viewBox="0 0 9 11" fill="none" stroke="#1e94e8">
            <path d="M.5.5h5l3 3v7h-8zM5.500.5v3h3" strokeWidth="1.2" />
          </svg>
          <svg width="19" height="11" viewBox="0 0 19 11" fill="none" stroke="#aaa">
            <path d="M.5.5h4l3 3v7h-7zM10.500.5h4l3 3v7h-7z" />
          </svg>
          <svg width="17" height="11" viewBox="0 0 17 11" fill="none" stroke="#aaa">
            <path d="M3.500.5h10l3 3v7H.5v-7zM8.500.5v10" />
          </svg>
        </Cell>
        <Cell $w={142}>
          −
          <Zoom type="range" aria-label="Escala" defaultValue={50} />
          +
        </Cell>
        <Cell $w={38}>110 %</Cell>
      </StatusBar>
      <WinFoot />
    </WriterWin>
  );
}

/* ---------- virtual machine with YaST ---------- */

const VmWin = styled(Win)`
  left: 873px;
  top: 213px;
  width: 802px;
  border-color: #4f4f4f;
`;

const YastTitle = styled.header`
  display: flex;
  align-items: center;
  height: 25px;
  padding: 0 8px 0 4px;
  border-top: 2px solid #6b6d68;
  background: linear-gradient(#868880, #9fa199);
  color: #eeeeec;
`;

const YastName = styled.h2`
  flex: 1;
  margin: 0;
  text-align: center;
  font: bold 12px/18px ${TITLE};
  text-shadow: 0 1px 1px #555;
`;

const YastBody = styled.div`
  padding: 8px 7px 0 8px;
  background: #e8e8e7;
  color: #2e3436;
  font: 13px/16px ${YAST};
`;

const Heading = styled.h3`
  margin: 0 0 4px 4px;
  font: bold 19px/26px ${YAST};
`;

const TabStrip = styled.div`
  display: flex;
  align-items: flex-end;
  margin-right: 2px;
  border-bottom: 1px solid #a5a5a1;
`;

const YTab = styled.button<{ $active?: boolean }>`
  width: ${(p) => (p.$active ? 156 : 157)}px;
  height: ${(p) => (p.$active ? 31 : 28)}px;
  margin-bottom: ${(p) => (p.$active ? -1 : 0)}px;
  border: 1px solid #a5a5a1;
  border-bottom: 0;
  border-radius: 3px 3px 0 0;
  background: ${(p) => (p.$active ? '#fff' : '#f0f0ef')};
`;

const Section = styled.h4<{ $w: number }>`
  width: ${(p) => p.$w}px;
  overflow: hidden;
  white-space: nowrap;
  margin: 8px 0 2px 2px;
  font: bold 13px/16px ${YAST};
`;

const TwoCols = styled.div`
  display: grid;
  grid-template-columns: 372px 374px;
  column-gap: 17px;
  padding-left: 15px;
`;

const Stack = styled.div`
  display: flex;
  flex-direction: column;
  gap: 11px;
`;

const Field = styled.label<{ $off?: boolean }>`
  display: flex;
  flex-direction: column;
  gap: 4px;
  color: ${(p) => (p.$off ? '#9a9c9a' : 'inherit')};
`;

const TextBox = styled.input`
  height: 29px;
  width: 372px;
  padding: 0 2px;
  border: 1px solid #a0a09c;
  border-radius: 3px;
  background: linear-gradient(#eee, #fff 6px);
  color: #000;
`;

const ListBox = styled.textarea`
  height: 150px;
  resize: none;
  padding: 6px 4px;
  border: solid #a0a09c;
  border-width: 1px 0 0 1px;
  background: #fff;
  color: #111;
  outline: 0;
`;

const Checks = styled.div`
  display: flex;
  flex-direction: column;
  gap: 9px;
  margin: 9px 0 0 12px;
`;

const CheckRow = styled.div`
  display: flex;
  align-items: center;
  gap: 25px;
  height: 16px;
`;

const Check = styled.label<{ $off?: boolean }>`
  display: flex;
  align-items: center;
  gap: 7px;
  color: ${(p) => (p.$off ? '#9a9c9a' : 'inherit')};
`;

const Box = styled.input`
  appearance: none;
  position: relative;
  width: 15px;
  height: 15px;
  border: 1px solid #a0a09c;
  border-radius: 3px;
  background: #f6f6f5;
  &:checked::after {
    content: '';
    position: absolute;
    left: 4px;
    top: -2px;
    width: 6px;
    height: 11px;
    border: solid #222;
    border-width: 0 3px 3px 0;
    transform: rotate(40deg);
  }
`;

const Dns = styled.div`
  display: flex;
  gap: 17px;
  margin: 26px 0 0 7px;
`;

const PickWrap = styled.span<{ $w: number }>`
  position: relative;
  width: ${(p) => p.$w}px;
  height: 27px;
`;

const Pick = styled.select`
  appearance: none;
  width: 100%;
  height: 100%;
  padding: 0 19px 0 4px;
  border: 1px solid #9c9c98;
  border-radius: 3px;
  background: linear-gradient(#f2f2f1, #d3d3d1);
  color: #2e3436;
  opacity: 1;
  overflow: hidden;
  &:disabled {
    background: #f0f0ef;
  }
`;

const PickArrow = styled.svg`
  position: absolute;
  right: 8px;
  top: 11px;
  pointer-events: none;
`;

const Actions = styled.div`
  display: flex;
  gap: 153px;
  margin: 54px -2px 0 -4px;
  padding-bottom: 8px;
`;

const Action = styled.button<{ $push?: boolean }>`
  width: 83px;
  height: 25px;
  margin-left: ${(p) => (p.$push ? 'auto' : '0')};
  border: 1px solid #9c9c98;
  border-radius: 3px;
  background: linear-gradient(#f2f2f1, #d0d0ce);
`;

const Panel = styled.div`
  display: flex;
  align-items: center;
  height: 25px;
  padding-left: 8px;
  border-top: 1px solid #fff;
  background: #e9e9e7;
  color: #3a3f41;
  font: 13px/18px ${YAST};
`;

const PanelMenu = styled.button`
  flex: none;
  display: flex;
  align-items: center;
  gap: 4px;
  width: 96px;
  border-right: 1px solid #c9c9c6;
`;

const PanelTask = styled.button<{ $active?: boolean }>`
  flex: none;
  display: flex;
  align-items: center;
  gap: 7px;
  width: 195px;
  height: 22px;
  margin-right: 3px;
  padding: 0 5px;
  border: 1px solid #9c9c98;
  border-radius: 3px;
  white-space: nowrap;
  background: ${(p) => (p.$active ? '#cfcfca' : 'linear-gradient(#f0f0ee, #d8d8d5)')};
`;

const PanelTray = styled.div`
  flex: 1;
  display: flex;
  align-items: center;
  justify-content: flex-end;
  padding-right: 8px;
`;

const PagerCell = styled.span<{ $active?: boolean }>`
  display: grid;
  place-items: center;
  width: 30px;
  height: 22px;
  margin-left: 1px;
  background: ${(p) => (p.$active ? '#86b9f2' : '#a3a49e')};
  border: 1px solid ${(p) => (p.$active ? '#fff' : '#a3a49e')};
`;

const PanelText = styled.span<{ $ml: number }>`
  margin-left: ${(p) => p.$ml}px;
`;

const VmStatus = styled.footer`
  display: flex;
  align-items: center;
  justify-content: flex-end;
  gap: 5px;
  height: 22px;
  padding-right: 25px;
  background: #efebe7;
  color: #222;
  font: 13px/18px ${UI};
`;

function Ind({ children }: { children: React.ReactNode }) {
  return (
    <svg width="16" height="16" viewBox="0 0 16 16">
      {children}
    </svg>
  );
}

function Vm() {
  return (
    <VmWin>
      <TitleBar $active>
        <GuestIcon size={18} />
        <TitleText>OpenSUSE Cliente [Corriendo] - Oracle VM VirtualBox</TitleText>
        <Buttons />
      </TitleBar>
      <MenuBar>
        {['Archivo', 'Máquina', 'Ver', 'Entrada', 'Dispositivos', 'Ayuda'].map((m) => (
          <span key={m}>{m}</span>
        ))}
      </MenuBar>
      <YastTitle>
        <YastBall size={18} />
        <YastName>YaST2</YastName>
        <svg width="52" height="14" viewBox="0 0 52 14" fill="none" stroke="#eeeeec" strokeWidth="1.5">
          <path d="M2 11h8" strokeWidth="2" />
          <path d="M24 4h6v6h-6zM26 7h2M43 3l7 8M50 3l-7 8" />
        </svg>
      </YastTitle>
      <YastBody>
        <Heading>Configuración de red</Heading>
        <TabStrip>
          <YTab>
            <u>O</u>pciones globales
          </YTab>
          <YTab>
            <u>V</u>ista resumen
          </YTab>
          <YTab $active>
            No<u>m</u>bre de Host/DNS
          </YTab>
          <YTab>
            E<u>n</u>caminamiento
          </YTab>
        </TabStrip>
        <Section $w={217}>Nombre de host y nombre de dominio</Section>
        <TwoCols>
          <Field>
            <span>
              Nombre de <u>h</u>ost
            </span>
            <TextBox defaultValue="hernandez20h" />
          </Field>
          <Field>
            <span>
              Nombre de <u>d</u>ominio
            </span>
            <TextBox defaultValue="curso1718" />
          </Field>
        </TwoCols>
        <Checks>
          <CheckRow>
            <Check $off>
              <Box type="checkbox" disabled />
              <span>
                Modi<u>f</u>icar nombre de host mediante DHCP
              </span>
            </Check>
            <span>Ninguna interfaz con dhcp</span>
          </CheckRow>
          <CheckRow>
            <Check>
              <Box type="checkbox" defaultChecked />
              <span>
                <u>A</u>signar nombre de host a la IP de bucle local
              </span>
            </Check>
          </CheckRow>
        </Checks>
        <Dns>
          <Field>
            <span>
              Mod<u>i</u>ficar la configuración de DNS
            </span>
            <PickWrap $w={196}>
              <Pick>
                <option>Usar valores predeterminados</option>
              </Pick>
              <PickArrow width="10" height="6" viewBox="0 0 10 6">
                <path d="M0 0h10L5 6z" fill="#222" />
              </PickArrow>
            </PickWrap>
          </Field>
          <Field $off>
            <span>
              <u>R</u>eglas personalizadas
            </span>
            <PickWrap $w={156}>
              <Pick disabled>
                <option></option>
              </Pick>
              <PickArrow width="10" height="6" viewBox="0 0 10 6">
                <path d="M0 0h10L5 6z" fill="#8c8c88" />
              </PickArrow>
            </PickWrap>
          </Field>
        </Dns>
        <Section $w={323}>Servidores de nombres y lista de búsqueda de dominios</Section>
        <TwoCols>
          <Stack>
            <Field>
              <span>
                Servidor de nombres <u>1</u>
              </span>
              <TextBox defaultValue="8.8.4.4" />
            </Field>
            <Field>
              <span>
                Servidor de nombres <u>2</u>
              </span>
              <TextBox />
            </Field>
            <Field>
              <span>
                Servidor de nombres <u>3</u>
              </span>
              <TextBox />
            </Field>
          </Stack>
          <Field>
            <span>
              <u>B</u>úsqueda de dominio
            </span>
            <ListBox defaultValue="suse" />
          </Field>
        </TwoCols>
        <Actions>
          <Action>
            Ay<u>u</u>da
          </Action>
          <Action $push>
            <u>C</u>ancelar
          </Action>
          <Action>
            Ac<u>e</u>ptar
          </Action>
        </Actions>
      </YastBody>
      <Panel>
        <PanelMenu>
          <svg width="18" height="14" viewBox="0 0 18 14">
            <ellipse cx="7" cy="7" rx="7" ry="6" fill="#3a3f41" />
            <path d="M3 8c1 3 6 3 7-1 0-3-4-3-4-1" fill="none" stroke="#c9cbc8" />
            <path d="M13 1c4 3 4 9 0 12" fill="none" stroke="#e9e9e7" strokeWidth="1.5" />
            <path d="M14 1c4 3 4 9 0 12" fill="none" stroke="#3a3f41" strokeWidth="1.8" />
          </svg>
          openSUSE
        </PanelMenu>
        <svg width="37" height="18" viewBox="0 0 37 18">
          <path d="M11 3h5l1 2h6v10H11z" fill="#a98a5e" />
          <path d="M13 8h8v5h-8z" fill="#d9c3a0" />
          <path d="M32 2v3M32 7.5v3M32 13v3" stroke="#9a9a96" strokeWidth="2.5" />
        </svg>
        <PanelTask>
          <svg width="15" height="15" viewBox="0 0 15 15">
            <path d="M2 3l6 5 4 5" stroke="#8aa9d8" strokeWidth="3" />
            <path d="M6 9l5 4" stroke="#e9a23b" strokeWidth="3.5" />
          </svg>
          Centro de control YaST @ ...
        </PanelTask>
        <PanelTask $active>
          <YastBall size={14} />
          YaST2
        </PanelTask>
        <PanelTray>
          <svg width="72" height="22" viewBox="0 0 72 22">
            <path d="M2 9h3l3-3v10l-3-3H2z" fill="#8d8f8b" />
            <path d="M10 8v6M12.5 7v8" stroke="#8fb2e0" />
            <path d="M28 6h10v4H28l4 3h6" fill="none" stroke="#555" strokeWidth="2" />
            <path d="M40 5l-5 7h4l-2 6 6-8h-4z" fill="#f2b01e" />
            <rect x="48.5" y=".5" width="23" height="21" fill="#d6d6d2" stroke="#a0a09c" />
            <path d="M57.5 2.5h12v8h-12z" fill="#2f5f9f" stroke="#333" />
            <path d="M50.5 7.5h12v8h-12z" fill="#2f5f9f" stroke="#ddd" />
            <path d="M50 18h12" stroke="#666" strokeWidth="2" />
            <path d="M63 13h7v7h-7z" fill="#777" />
            <path d="M65 15l3 3M68 15l-3 3" stroke="#eee" />
          </svg>
          <PagerCell $active>
            <YastBall size={17} />
          </PagerCell>
          <PagerCell />
          <PanelText $ml={19}>10:40</PanelText>
          <PanelText $ml={25}>noelia</PanelText>
        </PanelTray>
      </Panel>
      <VmStatus>
        <Ind>
          <rect x="2" y="1" width="12" height="14" rx="2" fill="#e8f3ff" stroke="#1a5fb8" strokeWidth="2" />
          <circle cx="8" cy="7" r="3" fill="none" stroke="#1a5fb8" strokeWidth="1.5" />
          <path d="M5 12l4-5" stroke="#1a5fb8" strokeWidth="2" />
        </Ind>
        <Ind>
          <circle cx="8" cy="8" r="7" fill="#e2e2e2" stroke="#a8a8a8" />
          <circle cx="8" cy="8" r="2.5" fill="#fff" stroke="#a8a8a8" />
        </Ind>
        <Ind>
          <rect x="6" y="1" width="9" height="8" fill="#3f97f0" stroke="#163e80" />
          <rect x="1" y="6" width="9" height="8" fill="#2f8cf0" stroke="#163e80" />
          <rect x="2.5" y="7.5" width="6" height="4" fill="#cfe6ff" />
        </Ind>
        <Ind>
          <path d="M2 15l1-5 8-9c3-1 4 1 4 3l-8 8z" fill="#57aef5" stroke="#163e80" />
          <path d="M10 3l4 3" stroke="#fff" />
        </Ind>
        <Ind>
          <path d="M1 4h5l2-2h7v12H1z" fill="#cfcfcf" stroke="#9a9a9a" />
        </Ind>
        <Ind>
          <rect x="1" y="2" width="14" height="10" fill="#2f8cf0" stroke="#163e80" />
          <path d="M3 14h10" stroke="#888" strokeWidth="2" />
        </Ind>
        <Ind>
          <rect x="1" y="5" width="9" height="9" fill="#3f77d8" stroke="#163e80" />
          <rect x="6" y="1" width="9" height="8" fill="#8fb0ff" stroke="#2338a0" />
        </Ind>
        <Ind>
          <rect x="1.5" y="1.5" width="13" height="13" fill="#6f80e0" stroke="#3a49b5" strokeWidth="2" strokeDasharray="1.5 1" />
          <path d="M5 4v5c0 3 6 3 6 0V4" fill="none" stroke="#fff" strokeWidth="2" />
        </Ind>
        <Ind>
          <circle cx="8" cy="8" r="7" fill="#9fd6f5" stroke="#2a6fa8" />
          <path d="M5 3l5 5-3 6 6-2 1-6-3-2z" fill="#5cc832" stroke="#1c6f12" />
        </Ind>
        <Ind>
          <rect x="1.5" y="1" width="13" height="14" rx="2" fill="#e8f1fb" stroke="#2a66a8" strokeWidth="1.5" />
          <path d="M6 3h4v5h3l-5 5-5-5h3z" fill="#222" />
        </Ind>
        <span>Ctrl Derecho</span>
      </VmStatus>
      <WinFoot />
    </VmWin>
  );
}

/* ---------- host task bar ---------- */

const TaskBar = styled.footer`
  flex: none;
  display: flex;
  align-items: center;
  height: 24px;
  border-top: 1px solid #6f6f6f;
  border-bottom: 1px solid #8a8a8a;
  background: linear-gradient(#f0f0f0, #b9b9b9);
  color: #1c1c1c;
`;

const Start = styled.button`
  display: grid;
  place-items: center;
  width: 48px;
  height: 22px;
  background: linear-gradient(#a9c7e4, #2e6ba5 60%, #1b4f86);
`;

const Launchers = styled.div`
  display: flex;
  gap: 5px;
  padding: 0 8px 0 9px;
`;

const Launcher = styled.button`
  width: 23px;
  height: 22px;
`;

const Pager = styled.div`
  display: flex;
  width: 71px;
  height: 20px;
  margin-right: 8px;
  background: #aaa6a2;
`;

const Task = styled.button<{ $active?: boolean }>`
  display: flex;
  align-items: center;
  gap: 2px;
  width: 145px;
  height: 22px;
  margin-right: 6px;
  font-size: 15px;
  line-height: 20px;
  white-space: nowrap;
  ${(p) => p.$active && 'background: linear-gradient(#7d7d7d, #9a9a9a); color: #f0f0f0;'}
`;

const Tray = styled.div`
  display: flex;
  align-items: center;
  gap: 9px;
  margin-left: auto;
  padding-right: 4px;
`;

const Clock = styled.time`
  font: 500 14px/20px ${UI};
  color: #111;
`;

function Bar() {
  return (
    <TaskBar>
      <Start aria-label="Menú de inicio">
        <svg width="24" height="22" viewBox="0 0 24 22">
          <circle cx="12" cy="11" r="10" fill="#3f7db8" stroke="#c9ddf0" />
          <path d="M3 12c2-4 6-7 12-8 3 0 5 2 6 4-4-1-6 0-6 2l-1 9-3-9c-2 3-3 6-6 8 0-3 1-5 2-7-1 0-3 1-4 1z" fill="#e8f1fa" />
        </svg>
      </Start>
      <Launchers>
        <Launcher aria-label="Archivos">
          <svg width="23" height="22" viewBox="0 0 23 22">
            <path d="M1 1h7l2 2h10v17H1z" fill="#dfe6ec" stroke="#7f8c98" />
            <path d="M4 5h17v15H4z" fill="#5b93c4" stroke="#3d6f9d" />
            <path d="M14 8l6 6-3 1 1 4-2 1-2-4-2 2z" fill="#e8e8e8" stroke="#555" strokeWidth=".7" />
          </svg>
        </Launcher>
        <Launcher aria-label="Navegador">
          <svg width="23" height="22" viewBox="0 0 23 22">
            <rect x=".5" y=".5" width="21" height="20" rx="3" fill="#1e5271" stroke="#12384f" />
            <path d="M3 6l6-2 2 3-3 2v3l-2-1zM13 4l6 2-1 4-3-1-2 2zM9 12l4 1-1 5-2-2zM15 13l4 1-3 4z" fill="#c3e1ee" />
          </svg>
        </Launcher>
        <Launcher aria-label="Ventanas">
          <svg width="23" height="22" viewBox="0 0 23 22">
            <rect x="1" y="1" width="20" height="19" rx="2" fill="#e3e4e6" stroke="#6c7075" />
            <path d="M1 2h20v5H1z" fill="#6d96b8" />
            <path d="M12 4h2M15 4h2M18 4h2" stroke="#fff" />
          </svg>
        </Launcher>
      </Launchers>
      <Pager>
        <svg width="35" height="20" viewBox="0 0 35 20">
          <rect width="35" height="20" fill="#88abd0" />
          <path d="M0 0h3v20H0z" fill="#4a78a8" />
          <rect x="4" y="1" width="14" height="18" fill="#cdddee" stroke="#fff" />
          <rect x="6" y="4" width="10" height="12" rx="1" fill="#e5601b" />
          <circle cx="12" cy="9" r="4" fill="#245a94" />
          <path d="M18 1h12v18H18z" fill="none" stroke="#fff" />
          <rect x="16" y="5" width="13" height="10" fill="#dce8f5" stroke="#fff" />
        </svg>
      </Pager>
      <Task>
        <FirefoxLogo size={18} />
        libro-de-activid…
      </Task>
      <Task>
        <VBoxCube size={18} />
        Oracle VM Virt…
      </Task>
      <Task>
        <svg width="18" height="18" viewBox="0 0 18 18">
          <rect x="2.5" y=".5" width="13" height="17" fill="#f2f6fa" stroke="#7b8fa3" />
          <path d="M3 1h3v16H3z" fill="#6e9cc8" />
          <path d="M8 4h5M8 6.5h5M8 9h5M8 12h4" stroke="#8a96a3" />
        </svg>
        Sin título 1.odt …
      </Task>
      <Task>
        <svg width="18" height="18" viewBox="0 0 18 18">
          <path d="M1 2h7l1 2h8v13H1z" fill="#4380b5" />
          <path d="M1 5h16v11H1z" fill="#79b0dc" />
        </svg>
        add
      </Task>
      <Task $active>
        <GuestIcon size={20} />
        OpenSUSE Clie…
      </Task>
      <Tray>
        <svg width="74" height="20" viewBox="0 0 74 20">
          <path d="M1 8h3l5-5v14l-5-5H1z" fill="#999" />
          <path d="M11 10h12" stroke="#aaa" strokeWidth="1.5" strokeDasharray="2 2" />
          <path d="M34 2l-9 9h5l-3 7 10-9h-6z" fill="#444" />
          <rect x="62" y="1.5" width="9" height="8" rx="1.5" fill="#e2e2e2" stroke="#555" strokeWidth="2" />
          <rect x="53" y="11" width="9" height="7" rx="1.5" fill="#e2e2e2" stroke="#555" strokeWidth="2" />
          <path d="M67 10v5h-5" fill="none" stroke="#555" strokeWidth="2" />
        </svg>
        <Clock>10:40</Clock>
        <svg width="16" height="16" viewBox="0 0 16 16" fill="none" stroke="#555" strokeWidth="1.8">
          <path d="M8 0v8M5 3a6 6 0 1 0 6 0" />
        </svg>
      </Tray>
    </TaskBar>
  );
}

function Badge() {
  return (
    <LinkBadge width="10" height="10" viewBox="0 0 10 10">
      <rect x=".5" y=".5" width="9" height="9" fill="#fff" stroke="#000" />
      <path d="M2 2h5L5.5 3.5 8 6 6 8 3.5 5.5 2 7z" fill="#000" />
    </LinkBadge>
  );
}

const rays = [
  [0, 38, 133, 38, 0.35],
  [133, 38, 157, 42, 0.35],
  [133, 38, 108, 0, 0.25],
  [133, 38, 157, 113, 0.25],
  [133, 38, 81, 130, 0.3],
  [81, 130, 63, 203, 0.3],
  [0, 76, 40, 104, 0.35],
  [0, 148, 38, 141, 0.35],
  [81, 134, 99, 141, 0.35],
  [5, 438, 42, 285, 0.5],
  [5, 438, 99, 293, 0.45],
  [5, 438, 0, 428, 0.6],
  [5, 438, 0, 452, 0.6],
  [5, 438, 99, 540, 0.5],
  [5, 438, 99, 468, 0.45],
  [0, 653, 99, 631, 0.55],
  [30, 855, 0, 801, 0.75],
  [30, 855, 0, 845, 0.8],
  [30, 855, 0, 894, 0.9],
  [30, 855, 99, 737, 0.65],
  [30, 855, 99, 826, 0.75],
  [30, 855, 99, 957, 0.9],
  [30, 855, 80, 1058, 0.95],
];

export default function App() {
  return (
    <Screen>
      <Global />
      <Desktop>
        <Wallpaper width="160" height="1060" viewBox="0 0 160 1060">
          <path d="M5 438L99 468V1060H0V438z" fill="#2a5a96" opacity=".3" />
          {rays.map(([x1, y1, x2, y2, o], i) => (
            <line key={i} x1={x1} y1={y1} x2={x2} y2={y2} stroke="#12d5de" strokeOpacity={o} strokeWidth="1.2" />
          ))}
        </Wallpaper>
        <Shortcut $top={12}>
          <ShortcutIcon>
            <svg width="42" height="42" viewBox="0 0 42 42">
              <rect x="1.5" y="1.5" width="39" height="39" rx="3" fill="#e8e8e8" stroke="#9a9a9a" />
              <path d="M3 3h36v10H3z" fill="#6f6f6f" />
              <path d="M3 8h36v5H3z" fill="#8f8f8f" />
              <path
                d="M7 19h28M7 24h28M7 29h28M7 34h28"
                stroke="#9b9b9b"
                strokeWidth="2"
                strokeDasharray="2 4.5"
              />
            </svg>
          </ShortcutIcon>
          <ShortcutLabel>Papelera</ShortcutLabel>
        </Shortcut>
        <Shortcut $top={99}>
          <ShortcutIcon>
            <svg width="42" height="42" viewBox="0 0 42 42">
              <defs>
                <linearGradient id="act" x1="0" y1="0" x2="0" y2="1">
                  <stop offset="0" stopColor="#7ec8e3" />
                  <stop offset="1" stopColor="#2791c4" />
                </linearGradient>
              </defs>
              <rect x=".5" y=".5" width="41" height="41" rx="3" fill="url(#act)" stroke="#8ed0ea" />
              <path d="M6 19h5l4 13 6-20 3 12 4-13 4 15h5" fill="none" stroke="#fff" strokeWidth="2.2" />
            </svg>
            <Badge />
          </ShortcutIcon>
          <ShortcutLabel>{'Oracle VM\nVirtualBox'}</ShortcutLabel>
        </Shortcut>
        <Shortcut $top={202}>
          <ShortcutIcon>
            <svg width="48" height="45" viewBox="0 0 48 45">
              <rect x=".5" y=".5" width="43" height="37" rx="2" fill="#12304a" stroke="#0c1d2c" />
              <path d="M2 14h40v10H2z" fill="#26557a" opacity=".7" />
              <rect x="16" y="17" width="31" height="27" rx="3" fill="#6c6a66" stroke="#3c3b38" />
              <path d="M18 20h27v4H18z" fill="#8b8985" />
              <circle cx="36" cy="33" r="9" fill="#8d8b88" stroke="#444" />
              <circle cx="36" cy="33" r="5.5" fill="#23272c" />
              <circle cx="37" cy="33" r="2.5" fill="#3d8a6a" />
            </svg>
            <Badge />
          </ShortcutIcon>
          <ShortcutLabel $active>{'Capturar\npantalla'}</ShortcutLabel>
        </Shortcut>
        <Shortcut $top={316}>
          <ShortcutIcon>
            <FirefoxLogo size={42} />
            <Badge />
          </ShortcutIcon>
          <ShortcutLabel>{'Navegador\nweb Firefox'}</ShortcutLabel>
        </Shortcut>
        <Shortcut $top={411}>
          <ShortcutIcon>
            <svg width="42" height="42" viewBox="0 0 42 42">
              <rect x="1.5" y=".5" width="39" height="40" rx="2" fill="#dcdcdc" stroke="#a4a4a4" />
              <path d="M2 35h38" stroke="#aaa" />
              <path d="M31 37h5" stroke="#25d5e2" strokeWidth="2" />
              <g fill="none" stroke="#8e8e8e" strokeWidth="1.8">
                <path d="M21 27V9M21 24l-5-4v-5M21 21l5-3v-5" />
                <circle cx="21" cy="28" r="1.5" fill="#8e8e8e" />
                <path d="M18.5 10L21 6l2.500 4z" fill="#8e8e8e" />
              </g>
              <g fill="#8a8a8a">
                <circle cx="5" cy="5" r="1.2" />
                <circle cx="37" cy="5" r="1.2" />
                <circle cx="5" cy="31" r="1.2" />
                <circle cx="37" cy="31" r="1.2" />
              </g>
            </svg>
          </ShortcutIcon>
          <ShortcutLabel>TOSHIBA EXT</ShortcutLabel>
        </Shortcut>
        <Manager />
        <Writer />
        <Firefox />
        <Vm />
      </Desktop>
      <Bar />
    </Screen>
  );
}
